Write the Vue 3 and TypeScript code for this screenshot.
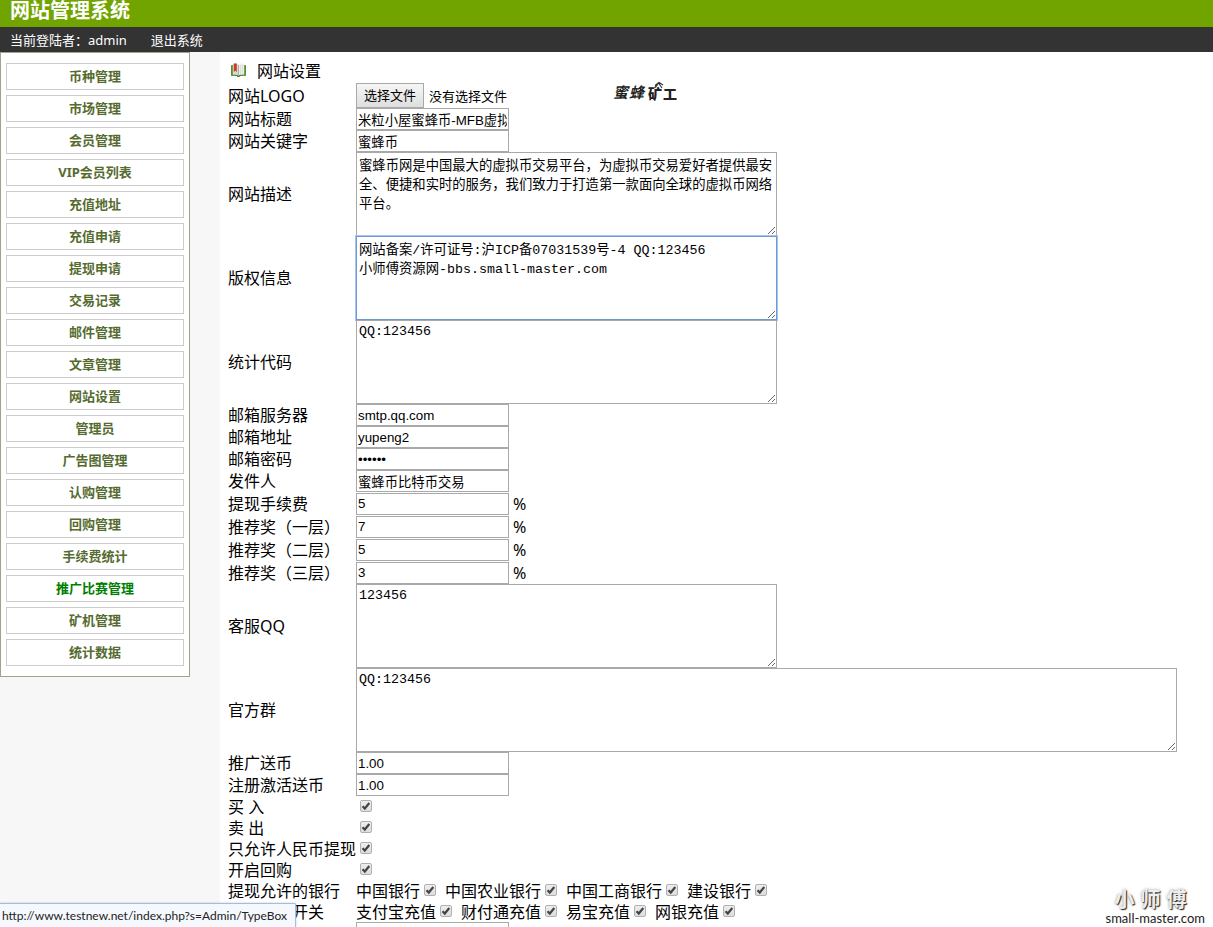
<script setup lang="ts">
import { onMounted, reactive, ref } from 'vue'

interface Field {
  id: string
  label: string
  kind: 'text' | 'password' | 'area' | 'check' | 'checks'
  value?: string
  suffix?: string
  wide?: boolean
  latin?: boolean
  options?: string[]
}

const menu = [
  '币种管理', '市场管理', '会员管理', 'VIP会员列表', '充值地址', '充值申请', '提现申请',
  '交易记录', '邮件管理', '文章管理', '网站设置', '管理员', '广告图管理', '认购管理',
  '回购管理', '手续费统计', '推广比赛管理', '矿机管理', '统计数据',
]
const activeItem = ref('推广比赛管理')

const fields = reactive<Field[]>([
  { id: 'title', label: '网站标题', kind: 'text', value: '米粒小屋蜜蜂币-MFB虚拟币交易平台' },
  { id: 'keywords', label: '网站关键字', kind: 'text', value: '蜜蜂币' },
  { id: 'description', label: '网站描述', kind: 'area', value: '蜜蜂币网是中国最大的虚拟币交易平台，为虚拟币交易爱好者提供最安全、便捷和实时的服务，我们致力于打造第一款面向全球的虚拟币网络平台。' },
  { id: 'copyright', label: '版权信息', kind: 'area', value: '网站备案/许可证号:沪ICP备07031539号-4 QQ:123456\n小师傅资源网-bbs.small-master.com' },
  { id: 'stats', label: '统计代码', kind: 'area', latin: true, value: 'QQ:123456' },
  { id: 'smtp', label: '邮箱服务器', kind: 'text', value: 'smtp.qq.com' },
  { id: 'mail', label: '邮箱地址', kind: 'text', value: 'yupeng2' },
  { id: 'mailpw', label: '邮箱密码', kind: 'password', value: '123456' },
  { id: 'sender', label: '发件人', kind: 'text', value: '蜜蜂币比特币交易' },
  { id: 'fee', label: '提现手续费', kind: 'text', value: '5', suffix: '%' },
  { id: 'level1', label: '推荐奖（一层）', kind: 'text', value: '7', suffix: '%' },
  { id: 'level2', label: '推荐奖（二层）', kind: 'text', value: '5', suffix: '%' },
  { id: 'level3', label: '推荐奖（三层）', kind: 'text', value: '3', suffix: '%' },
  { id: 'service', label: '客服QQ', kind: 'area', latin: true, value: '123456' },
  { id: 'group', label: '官方群', kind: 'area', latin: true, wide: true, value: 'QQ:123456' },
  { id: 'promo', label: '推广送币', kind: 'text', value: '1.00' },
  { id: 'activate', label: '注册激活送币', kind: 'text', value: '1.00' },
  { id: 'buy', label: '买 入', kind: 'check' },
  { id: 'sell', label: '卖 出', kind: 'check' },
  { id: 'rmb', label: '只允许人民币提现', kind: 'check' },
  { id: 'buyback', label: '开启回购', kind: 'check' },
  { id: 'banks', label: '提现允许的银行', kind: 'checks', options: ['中国银行', '中国农业银行', '中国工商银行', '建设银行'] },
  { id: 'pay', label: '充值方式开关', kind: 'checks', options: ['支付宝充值', '财付通充值', '易宝充值', '网银充值'] },
  { id: 'extra', label: '', kind: 'text', value: '' },
])

onMounted(() => {
  const area = document.getElementById('copyright') as HTMLTextAreaElement | null
  area?.focus({ preventScroll: true })
})
</script>

<template>
  <div class="page">
    <header>
      <h1 class="brand">网站管理系统</h1>
      <div class="userbar">
        <span>当前登陆者：admin</span>
        <a href="#">退出系统</a>
      </div>
    </header>

    <div class="body">
      <aside>
        <nav class="menu">
          <a
            v-for="item in menu"
            :key="item"
            href="#"
            :class="{ active: item === activeItem }"
            @click.prevent="activeItem = item"
          >{{ item }}</a>
        </nav>
      </aside>

      <main>
        <h2 class="heading">
          <svg class="book" viewBox="0 0 15 14" aria-hidden="true">
            <path d="M0 2.500 2 2v9.500h4l1.500 1 1.500-1h4V2l2 .5v10.300l-5.500.3-1 .9h-2l-1-.9-5.500-.3z" fill="#4f8a2c" />
            <path d="M1.500 1.200C3.500.2 6 .3 7.500 1.800v10.400c-1.500-1-4-1.200-6-.7z" fill="#d9d9d5" />
            <path d="M7.500 1.800C9 .3 11.500.2 13.500 1.200v10.300c-2-.5-4.500-.3-6 .7z" fill="#eeeeea" />
            <path d="M7.500 2v10" stroke="#999" stroke-width=".8" />
            <path d="M9.500 2v9M11.500 1.800v9" stroke="#d0d0cc" stroke-width=".6" />
            <path d="M1 2v10.500M14 2v10.500" stroke="#5c9638" stroke-width="1.200" />
            <path d="M2.800.6h3v8.400L4.300 7.700 2.800 9z" fill="#cf3a26" />
          </svg>
          网站设置
        </h2>

        <form @submit.prevent>
          <div class="row file-row">
            <label class="name" for="logo">网站LOGO</label>
            <label class="file">
              <input id="logo" type="file" />
              <span class="file-button">选择文件</span>
              <span>没有选择文件</span>
            </label>
            <svg class="site-logo" viewBox="0 0 66 24" role="img" aria-label="蜜蜂矿工">
              <g class="brush">
                <text x="0" y="18">蜜</text>
                <text x="16" y="18">蜂</text>
              </g>
              <g class="block">
                <text x="35" y="19">矿</text>
                <text x="50" y="19">工</text>
              </g>
              <path d="M42 5.500 46 2.500 50 5M45.500 3 49 8M45 4 41.500 8" fill="none" stroke="#333" stroke-width="1.200" />
            </svg>
          </div>

          <div v-for="f in fields" :key="f.id" class="row" :class="[f.kind, { percent: f.suffix }]">
            <label v-if="f.kind !== 'checks'" class="name" :for="f.id">{{ f.label }}</label>
            <span v-else class="name">{{ f.label }}</span>

            <textarea
              v-if="f.kind === 'area'"
              :id="f.id"
              v-model="f.value"
              :class="{ wide: f.wide, latin: f.latin }"
              spellcheck="false"
            ></textarea>
            <input v-else-if="f.kind === 'check'" :id="f.id" type="checkbox" checked />
            <template v-else-if="f.kind === 'checks'">
              <label v-for="o in f.options" :key="o" class="option">{{ o }}<input type="checkbox" checked /></label>
            </template>
            <input v-else :id="f.id" v-model="f.value" class="line" :type="f.kind" />
            <span v-if="f.suffix" class="suffix">{{ f.suffix }}</span>
          </div>
        </form>
      </main>
    </div>

    <div class="status">http://www.testnew.net/index.php?s=Admin/TypeBox</div>
    <div class="watermark">
      <div class="seal"><span>小</span><span>师</span><span>傅</span></div>
      <div>small-master.com</div>
    </div>
  </div>
</template>

<style>
body {
  margin: 0;
  overflow: hidden;
}
</style>

<style scoped>
.page {
  position: relative;
  display: flex;
  flex-direction: column;
  height: 100vh;
  overflow: hidden;
  background: #fff;
  color: #000;
  font-family: "Noto Sans", "Noto Sans CJK SC", sans-serif;
  font-size: 16px;
}
header {
  flex: none;
  color: #fff;
}
.brand {
  height: 27px;
  margin: 0;
  padding-left: 10px;
  background: #72a400;
  font-size: 20px;
  line-height: 22px;
}
.userbar {
  display: flex;
  gap: 24px;
  padding: 2px 0 0 10px;
  background: #333;
  font-size: 13px;
  line-height: 23px;
}
.userbar a {
  color: inherit;
  text-decoration: none;
}
.body {
  display: flex;
  flex: 1;
  min-height: 0;
}
aside {
  flex: none;
  width: 220px;
  background: #f7f7f7;
}
.menu {
  display: flex;
  flex-direction: column;
  gap: 5px;
  box-sizing: border-box;
  width: 190px;
  padding: 10px 5px;
  border: 1px solid #a2a28a;
  background: #fff;
}
.menu a {
  border: 1px solid #ccc;
  color: #556b2f;
  font-size: 13px;
  font-weight: bold;
  line-height: 25px;
  text-align: center;
  text-decoration: none;
}
.menu a.active {
  color: #008000;
}
main {
  flex: 1;
  min-width: 0;
  padding: 8px 8px 0;
}
.heading {
  display: flex;
  align-items: center;
  gap: 11px;
  height: 20px;
  margin: 0 0 3px;
  padding-left: 3px;
  font-size: 16px;
  font-weight: normal;
}
.book {
  width: 15px;
  height: 14px;
}
.row {
  display: flex;
  align-items: center;
  height: 22px;
  white-space: nowrap;
}
.name {
  flex: none;
  width: 128px;
  line-height: 20px;
}
.file-row {
  height: 25px;
}
.row.area {
  height: 84px;
}
.row.percent {
  height: 23px;
}
.row.check,
.row.checks {
  height: 21px;
}
.file {
  position: relative;
  display: flex;
  align-items: center;
  gap: 5px;
  width: 257px;
  font-size: 13px;
}
.file input {
  position: absolute;
  inset: 0;
  width: 100%;
  opacity: 0;
}
.file-button {
  padding: 0 7px;
  border: 1px solid #a9a9a9;
  background: linear-gradient(#f6f6f6, #dedede);
  line-height: 23px;
}
.site-logo {
  align-self: flex-start;
  width: 66px;
  height: 24px;
  margin-top: -3px;
  fill: #222;
}
.brush {
  font-size: 15px;
  font-style: italic;
  font-weight: bold;
}
.block {
  font-size: 14px;
  font-weight: 900;
}
.line {
  box-sizing: border-box;
  width: 153px;
  height: 22px;
  padding: 1px;
  border: 1px solid #a9a9a9;
  outline: none;
  color: #000;
  font-family: "Liberation Sans", "Noto Sans CJK SC", sans-serif;
}
.suffix {
  margin-left: 4px;
  line-height: 20px;
}
textarea {
  box-sizing: border-box;
  width: 421px;
  height: 84px;
  margin: 0;
  padding: 4px 2px 2px;
  border: 1px solid #a9a9a9;
  outline: none;
  color: #000;
  font-family: "Liberation Mono", "Noto Sans CJK SC", monospace;
  line-height: 19px;
  resize: both;
}
textarea.wide {
  width: 821px;
}
textarea.latin {
  padding-top: 3px;
  line-height: 16px;
}
textarea:focus {
  border-color: #6f98d8;
  box-shadow: 0 0 0 1px #a9c4ee;
  caret-color: transparent;
}
input[type='checkbox'] {
  appearance: none;
  box-sizing: border-box;
  width: 12px;
  height: 12px;
  margin: 0 4px 2px;
  border: 1px solid #b0b0b0;
  border-radius: 2px;
  background: #e6e6e6;
}
input[type='checkbox']:checked {
  background: url("data:image/svg+xml,%3Csvg xmlns='http://www.w3.org/2000/svg' viewBox='0 0 10 10'%3E%3Cpath d='M1.500 5.200 3.800 7.500 8.300 2' fill='none' stroke='%23444' stroke-width='2.200'/%3E%3C/svg%3E") center / 10px 10px no-repeat, linear-gradient(#eee, #ddd);
}
.option {
  display: flex;
  align-items: center;
  margin-right: 5px;
  line-height: 20px;
}
.status {
  position: absolute;
  bottom: 0;
  left: 0;
  padding: 0 8px 0 2px;
  border: 1px solid #a3bde0;
  border-width: 1px 1px 0 0;
  border-radius: 0 2px 0 0;
  background: #f5f8fd;
  box-shadow: 0 0 2px #bbb;
  color: #222;
  font-family: Lato, "Noto Sans", sans-serif;
  font-size: 12px;
  line-height: 23px;
}
.watermark {
  position: absolute;
  right: 8px;
  bottom: 0;
  color: #222;
  font-family: Lato, "Noto Sans CJK SC", sans-serif;
  font-size: 13px;
  line-height: 18px;
}
.seal {
  display: flex;
  gap: 6px;
  padding-left: 9px;
  color: #eee;
  font-size: 20px;
  font-weight: bold;
  line-height: 20px;
  text-shadow: 1px 1px 1px #222, 0 0 3px #999;
}
</style>
